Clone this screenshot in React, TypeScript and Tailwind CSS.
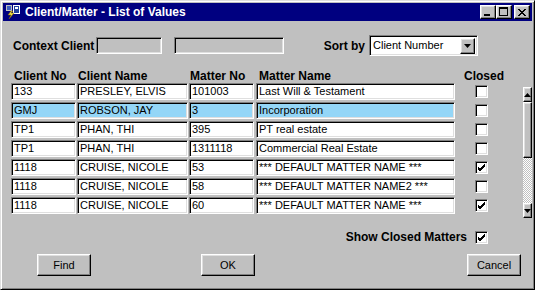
import React from "react";

const rows = [
  { no: "133", name: "PRESLEY, ELVIS", mno: "101003", mname: "Last Will & Testament", closed: false, sel: false },
  { no: "GMJ", name: "ROBSON, JAY", mno: "3", mname: "Incorporation", closed: false, sel: true },
  { no: "TP1", name: "PHAN, THI", mno: "395", mname: "PT real estate", closed: false, sel: false },
  { no: "TP1", name: "PHAN, THI", mno: "1311118", mname: "Commercial Real Estate", closed: false, sel: false },
  { no: "1118", name: "CRUISE, NICOLE", mno: "53", mname: "*** DEFAULT MATTER NAME ***", closed: true, sel: false },
  { no: "1118", name: "CRUISE, NICOLE", mno: "58", mname: "*** DEFAULT MATTER NAME2 ***", closed: false, sel: false },
  { no: "1118", name: "CRUISE, NICOLE", mno: "60", mname: "*** DEFAULT MATTER NAME ***", closed: true, sel: false },
];

const sunken =
  "border border-t-[#808080] border-l-[#808080] border-r-white border-b-white shadow-[inset_1px_1px_0_#000,inset_-1px_-1px_0_#dfdfdf]";
const raised =
  "border border-t-white border-l-white border-r-black border-b-black shadow-[inset_-1px_-1px_0_#808080,inset_1px_1px_0_#dfdfdf]";

function Field({ w, text, sel }: { w: string; text: string; sel: boolean }) {
  return (
    <div className={`${w} h-[17px] ${sunken} ${sel ? "bg-[#94d6f7]" : "bg-white"} pl-[2px] text-[11px] leading-[15px] whitespace-nowrap overflow-hidden`}>
      {text}
    </div>
  );
}

function Check({ on }: { on: boolean }) {
  return (
    <div className={`w-[13px] h-[13px] bg-white ${sunken} flex items-center justify-center`}>
      {on && (
        <svg width="9" height="9" viewBox="0 0 9 9">
          <path d="M1 4 L3 6 L8 1 M1 5 L3 7 L8 2 M1 6 L3 8 L8 3" stroke="#000" strokeWidth="1" fill="none" />
        </svg>
      )}
    </div>
  );
}

function Btn({ label, cls }: { label: string; cls: string }) {
  return (
    <div className={`${cls} w-[54px] h-[22px] ${raised} flex items-center justify-center text-[11px]`}>{label}</div>
  );
}

export default function App() {
  return (
    <div className="w-[535px] h-[290px] bg-[#c0c0c0] border border-t-[#dfdfdf] border-l-[#dfdfdf] border-r-black border-b-black shadow-[inset_1px_1px_0_#fff,inset_-1px_-1px_0_#808080] p-[2px] flex flex-col font-['Liberation_Sans',Arial,sans-serif] text-black">
      {/* title bar */}
      <div className="h-[18px] shrink-0 bg-[#000080] flex items-center pl-[2px] pr-[2px]">
        <svg width="16" height="16" viewBox="0 0 16 16" className="shrink-0">
          <rect x="1" y="1" width="6" height="6" fill="#c0c0c0" />
          <rect x="2" y="2" width="4" height="4" fill="#4060c0" />
          <rect x="8" y="1" width="7" height="9" fill="#fff" />
          <rect x="9" y="2" width="5" height="7" fill="#2040a0" />
          <rect x="10" y="3" width="3" height="2" fill="#fff" />
          <path d="M6 7 L3 11 L6 11 L4 15 L9 9 L6 9 L8 7 Z" fill="#f0e040" stroke="#806000" strokeWidth="0.5" />
        </svg>
        <span className="ml-[4px] text-white font-bold text-[12px] leading-none">Client/Matter - List of Values</span>
        <div className="ml-auto flex items-center">
          <div className={`w-[16px] h-[14px] bg-[#c0c0c0] ${raised} relative`}>
            <div className="absolute left-[3px] bottom-[2px] w-[6px] h-[2px] bg-black" />
          </div>
          <div className={`w-[16px] h-[14px] bg-[#c0c0c0] ${raised} relative`}>
            <div className="absolute left-[2px] top-[1px] w-[9px] h-[9px] border border-black border-t-2" />
          </div>
          <div className={`ml-[2px] w-[16px] h-[14px] bg-[#c0c0c0] ${raised} flex items-center justify-center`}>
            <svg width="8" height="7" viewBox="0 0 8 7">
              <path d="M0 0 L7 7 M1 0 L8 7 M7 0 L0 7 M8 0 L1 7" stroke="#000" strokeWidth="1" />
            </svg>
          </div>
        </div>
      </div>

      {/* context row */}
      <div className="mt-[14px] h-[21px] flex items-center pl-[10px]">
        <div className="w-[83px] font-bold text-[12px]">Context Client</div>
        <div className={`w-[66px] h-[17px] ${sunken} bg-[#c0c0c0]`} />
        <div className={`ml-[12px] w-[110px] h-[17px] ${sunken} bg-[#c0c0c0]`} />
        <div className="w-[85px] pr-[4px] text-right font-bold text-[12px]">Sort by</div>
        <div className={`w-[109px] h-[21px] ${sunken} bg-white flex items-center pl-[3px] pr-[2px] text-[11px]`}>
          <span>Client Number</span>
          <div className={`ml-auto w-[15px] h-[16px] bg-[#c0c0c0] ${raised} flex items-center justify-center`}>
            <svg width="7" height="4" viewBox="0 0 7 4">
              <path d="M0 0 H7 L3.5 4 Z" fill="#000" />
            </svg>
          </div>
        </div>
      </div>

      {/* list */}
      <div className="mt-[13px] flex pl-[8px]">
        <div className="flex flex-col">
          <div className="h-[14px] flex items-center font-bold text-[12px] whitespace-nowrap">
            <div className="w-[65px] pl-[3px]">Client No</div>
            <div className="ml-[1px] w-[111px] pl-[1px]">Client Name</div>
            <div className="ml-[1px] w-[65px] pl-[1px]">Matter No</div>
            <div className="ml-[2px] w-[199px] pl-[3px]">Matter Name</div>
            <div className="ml-[9px]">Closed</div>
          </div>
          <div className="flex flex-col gap-[2px]">
            {rows.map((r, i) => (
              <div key={i} className="flex items-center h-[17px]">
                <Field w="w-[65px]" text={r.no} sel={r.sel} />
                <div className="ml-[1px]">
                  <Field w="w-[111px]" text={r.name} sel={r.sel} />
                </div>
                <div className="ml-[1px]">
                  <Field w="w-[65px]" text={r.mno} sel={r.sel} />
                </div>
                <div className="ml-[2px]">
                  <Field w="w-[199px]" text={r.mname} sel={r.sel} />
                </div>
                <div className="ml-[20px]">
                  <Check on={r.closed} />
                </div>
              </div>
            ))}
          </div>
        </div>

        {/* scrollbar */}
        <div className="ml-[19px] mt-[18px] w-[15px] h-[131px] flex flex-col">
          <div className={`h-[15px] bg-[#c0c0c0] ${raised} flex items-center justify-center`}>
            <svg width="7" height="4" viewBox="0 0 7 4">
              <path d="M3.5 0 L7 4 H0 Z" fill="#000" />
            </svg>
          </div>
          <div className={`h-[56px] bg-[#c0c0c0] ${raised}`} />
          <div className="flex-1 bg-[repeating-conic-gradient(#c0c0c0_0%_25%,#ffffff_0%_50%)] bg-[length:2px_2px]" />
          <div className={`h-[15px] bg-[#c0c0c0] ${raised} flex items-center justify-center`}>
            <svg width="7" height="4" viewBox="0 0 7 4">
              <path d="M0 0 H7 L3.5 4 Z" fill="#000" />
            </svg>
          </div>
        </div>
      </div>

      {/* show closed */}
      <div className="mt-[12px] ml-[8px] w-[477px] h-[14px] flex items-center justify-end">
        <span className="font-bold text-[12px] mr-[8px]">Show Closed Matters</span>
        <Check on={true} />
      </div>

      {/* buttons */}
      <div className="mt-[10px] flex">
        <Btn label="Find" cls="ml-[34px]" />
        <Btn label="OK" cls="ml-[110px]" />
        <Btn label="Cancel" cls="ml-[212px]" />
      </div>
    </div>
  );
}
